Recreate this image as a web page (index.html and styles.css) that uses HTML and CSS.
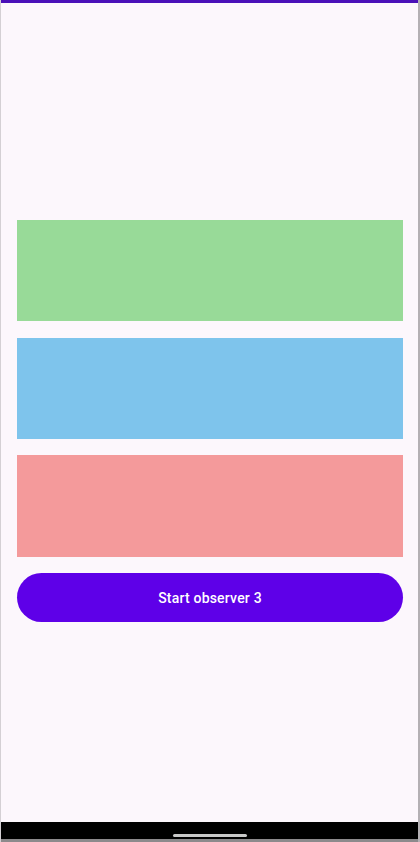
FILE: index.html
```html
<!DOCTYPE html>
<html lang="en">
<head>
    <meta charset="UTF-8">
    <meta name="viewport" content="width=device-width, initial-scale=1.0">
    <title>Observers</title>
    <link rel="stylesheet" href="styles.css">
</head>
<body>
    <div class="screen">
        <div class="status-bar"></div>

        <div class="content">
            <div class="block green"></div>
            <div class="block blue"></div>
            <div class="block red"></div>
            <button class="start-button">Start observer 3</button>
        </div>

        <div class="nav-bar">
            <span class="home-handle"></span>
        </div>
    </div>
</body>
</html>
```

FILE: styles.css
```css
html, body {
    margin: 0;
    padding: 0;
    height: 100%;
}

body {
    font-family: Roboto, 'Noto Sans', sans-serif;
    background-color: #fcf7fc;
}

.screen {
    height: 842px;
    display: flex;
    flex-direction: column;
    border-left: 1px solid #d4d0d4;
    border-right: 2px solid #b4b0b4;
    box-sizing: border-box;
}

.status-bar {
    height: 3px;
    background-color: #4a10b8;
}

.content {
    flex: 1;
    display: flex;
    flex-direction: column;
    gap: 17px;
    padding: 217px 15px 0 16px;
}

.block {
    height: 101px;
}

.block.green {
    background-color: #98da98;
}

.block.blue {
    background-color: #7ec4ec;
}

.block.red {
    height: 102px;
    margin-top: -1px;
    background-color: #f49a9b;
}

.start-button {
    height: 49px;
    margin-top: -1px;
    border: none;
    border-radius: 25px;
    background-color: #5e00e8;
    color: #ffffff;
    font-family: Roboto, 'Noto Sans', sans-serif;
    font-size: 14px;
    font-weight: 500;
    letter-spacing: 0.2px;
}

.nav-bar {
    height: 15px;
    background-color: #000;
    border-bottom: 3px solid #8c8a8c;
    display: flex;
    justify-content: center;
    align-items: flex-end;
    padding-bottom: 2px;
    box-sizing: content-box;
}

.home-handle {
    width: 74px;
    height: 3px;
    border-radius: 2px;
    background-color: #c8c8c8;
}
```
